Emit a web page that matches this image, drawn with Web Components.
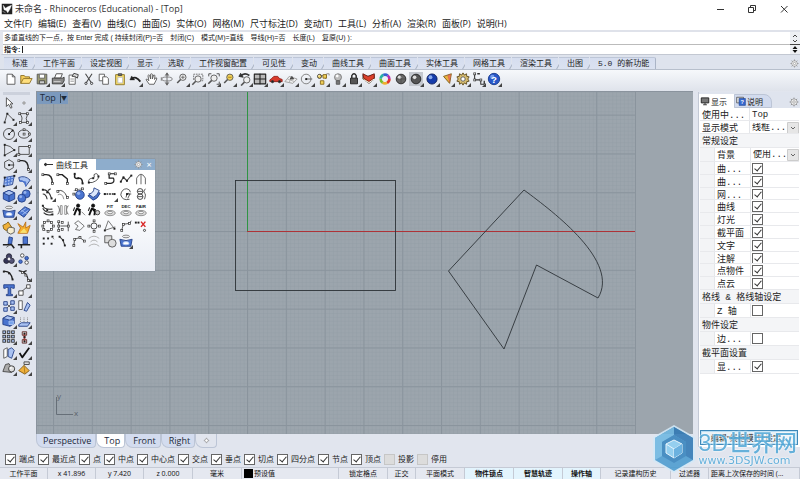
<!DOCTYPE html>
<html lang="zh-CN">
<head>
<meta charset="utf-8">
<title>未命名 - Rhinoceros (Educational) - [Top]</title>
<style>
html,body{margin:0;height:100%}
body{font-family:"Open Sans","Noto Sans CJK SC",sans-serif;color:#222;background:#e0e4ed}
</style>
</head>
<body>
<rhino-app></rhino-app>
<script>
const INK='#333';
const p=(d,s=INK,f='none',w=1)=>`<path d="${d}" stroke="${s}" fill="${f}" stroke-width="${w}" stroke-linejoin="round"/>`;
const c=(x,y,r,f='none',s=INK)=>`<circle cx="${x}" cy="${y}" r="${r}" fill="${f}" stroke="${s}"/>`;
const e=(x,y,a,b,f='none',s=INK)=>`<ellipse cx="${x}" cy="${y}" rx="${a}" ry="${b}" fill="${f}" stroke="${s}"/>`;
const n=(...a)=>a.map(([x,y])=>`<rect x="${x-1}" y="${y-1}" width="2.2" height="2.2" fill="#fff" stroke="#333" stroke-width=".8"/>`).join('');
const k=(...a)=>a.map(([x,y])=>`<rect x="${x-1}" y="${y-1}" width="2.2" height="2.2" fill="#222"/>`).join('');
const t=(s)=>`<text x="8" y="6" font-size="5" font-weight="700" text-anchor="middle" font-family="Liberation Sans" fill="#222">${s}</text>`+e(8,11.5,6,3,'#ddd','#888')+e(8,11,3,1.3,'#fff','#888');
const ball=(x,y,r,f,h='#fff',s='#333')=>c(x,y,r,f,s)+`<circle cx="${x-r*.3}" cy="${y-r*.35}" r="${r*.38}" fill="${h}" opacity=".8"/>`;
const B='#4a74cf',L='#a9c2f2',D='#243f86',Y='#f2d25a',G='#888';
const lens=(x,y,f='#eee')=>c(x,y,3.6,f,'#555')+p(`M${x-2.6} ${y+2.6}L${x-6.5} ${y+6.5}`,'#555','none',1.8);
const walker=c(7,3,1.8,'#111','#111')+p('M6 5.5L4 10L2.5 14M6 6L9 10L8.5 14M6 6.5L10 8.5','#111','none',2.2)+p('M3 5L1.5 9','#111','none',1.2);
const vase=e(8,2.8,4,1.5,'#eee','#777')+p('M1 6L2.5 14H13.5L15 6Q8 9 1 6Z',D,B)+e(8,10.5,3.5,1.8,'#fff',L);
const ICONS={
 logo:'<rect x="1" y="1" width="14" height="14" fill="#222"/>'+p('M3 3L6 7L9 5L14 3L12 8L9 13L7 10L4 9Z','#fff','#fff',.5)+p('M2 11L6 13','#999'),
 file:p('M3.5 2.5H9.5L12.5 5.5V14H3.5ZM9.5 2.5V5.5H12.5','#555','#fff'),
 open:p('M2 13V4H6L7 5.5H12V7.5','#8d6f24','#f3cc58')+p('M2 13L5 7.5H15L12 13Z','#8d6f24','#ffdf7d'),
 save:p('M2.5 2.5H13.5V13.5H2.5Z','#555','#9a9a72')+p('M5 2.5H11V7H5Z','#666','#fff')+p('M5 10H11V13.5H5Z','#444','#ccc'),
 print:p('M4 7L6 2H13L11 7Z','#444','#fff')+p('M1.5 7H13L15 6V10L13 13.5H1.5Z','#333','#888')+p('M3 11H11','#ddd'),
 props:p('M3.5 3.5H10.5V14H3.5Z','#555','#fff')+p('M7 5L9 1.5L14 3L13 7L10 5Z','#333','#ddd')+p('M5 8H9M5 10.5H9',G),
 cut:p('M4 2L10.5 12M11.5 2L5 12','#444','none',1.2)+c(4.5,13,1.3)+c(11,13,1.3),
 copy:p('M2.5 2.5H8.5V10H2.5Z','#555','#fff')+p('M6.5 5.5H11L13 7.5V14H6.5Z','#555','#fff'),
 paste:p('M3 3H13V14.5H3Z','#8c7424','#f5da66')+p('M5.5 6H11V12.5H5.5Z','#bbb','#fff')+p('M6 2H10V4H6Z','#444','#777'),
 undo:p('M3 8Q8 4 13 11','#222','none',2)+p('M1 9L3 4.5L6.5 9Z','#222','#222',.5),
 hand:p('M6 14L2.5 9Q2 7.5 4 8.5L5.5 10L4.5 4Q5.5 2.5 6.5 4L7.5 8V2.5Q8.5 1.5 9.5 2.5V8L11 3.5Q12.5 3 12.5 4.5L12 8.5L13.5 6.5Q15 6.5 14.5 8L11.5 14Z','#555','#fff'),
 orbit:e(8,8,6,2.3,'none','#777')+p('M8 1V15M6 4L8 1L10 4M6 12L8 15L10 12','#666','#666')+p('M1.5 6V10','#777'),
 zoom:lens(9,6)+p('M9 4V8M7 6H11','#666'),
 zwin:p('M3 9V2.5H13.5V10H9','#666','none').replace('/>',' stroke-dasharray="2 1"/>')+lens(8,8),
 zext:p('M2 5V2H5M11 2H14V5M14 11V14H11','#444')+lens(8,7),
 zsel:lens(9,6,Y)+p('M7 6H11',"#a47c12"),
 vundo:p('M3 5Q7 0 13 4','#333','none',1.8)+p('M1 5L3 1.5L6 6Z','#333','#333')+lens(10,9),
 four:p('M1.5 2.5H14.5V13.5H1.5Z','#222','#b9b9b9',1.3)+p('M8 2V14M1 8H15','#222','none',1.3),
 car:p('M1 9L3 7.5L5.5 5H10L12 7.5L15 8.5V11H1Z','#8e1b16','#d83a2c')+c(4,11,1.3,'#222')+c(12,11,1.3,'#222'),
 cplane:p('M1 11L6 5L15 8L10 13Z','#999','#eee')+p('M4 8L12 11M8 6L6 12','#aaa')+p('M7 8H11L9 5Z','#444','#555'),
 circ:c(7,8,5.5,'none','#777')+p('M7 8H14','#555')+k([7,8]),
 objs:p('M5 5L12 3L11 8','#555')+ball(4,5,2.3,Y)+p('M8 3H12V7H8ZM5 10H9V14H5Z','#866719',Y)+p('M12 2H15V4',G),
 bulb:c(8,6,4,'#bbb','#777')+p('M6 10H10V14H6Z','#555','#777')+c(7,4.5,1.2,'#fff','#fff'),
 lock:p('M5.5 7V4Q8 0 10.5 4V7','#222','none',1.6)+p('M4 7H12V13.5H4Z','#222','#555'),
 layer:p('M1 3L6 5L14 3V8L8 13L1 8Z','#555','#f8a54b')+p('M1 2L7 5L14 2V7L8 11L2 7Z','#6e1c14','#db3f2a')+p('M2 9L8 12L14 8','#fff'),
 wheel:['#e3382a','#efb02d','#79bd31','#27b0a4','#315fd1','#b22eae'].map((v,i)=>`<circle cx="8" cy="8" r="5" fill="none" stroke="${v}" stroke-width="3" stroke-dasharray="5.3 26.2" stroke-dashoffset="${-5.236*i}"/>`).join(''),
 ball:ball(8,8,5.5,'#666','#fff','#222')+p('M8 3V13M3 8H13','#444','none',.6),
 ballbox:'<rect width="16" height="16" fill="#c4c8cf"/>'+ball(8,8,5.5,'#555','#fff','#222'),
 blueball:ball(8,8,5.8,'#163cab','#a7c8ff','#0a1b58'),
 arrow:p('M4 5L13 2L11 13Z','#795b1c','#e9b23f')+p('M9 4L12 3L11 11Z','#c44','#ee815a',.5),
 gear:`<g stroke="#5a4719" fill="#d7bd71"><path d="M8 1L9.5 3.5L12 2L12.3 5L15 5.5L13.5 8L15 10.5L12.3 11L12 14L9.5 12.5L8 15L6.5 12.5L4 14L3.7 11L1 10.5L2.5 8L1 5.5L3.7 5L4 2L6.5 3.5Z"/></g>`+c(8,8,2.5,'#fff','#555'),
 dim:p('M3 2V9H10V14H14','#333','none',1.2)+n([3,2],[10,9],[3,9])+p('M6 2H9M14 10V14','#333','none',1.5),
 help:ball(8,8,6.5,'#2857c8','#88aef5','#15388c')+'<text x="8" y="12" font-size="11" font-weight="700" text-anchor="middle" font-family="Liberation Sans" fill="#fff">?</text>',
 select:p('M5 2L5 12L7.5 9.5L10 14L11.5 13L9.5 9H12.5Z','#444','#fff'),
 point:c(8,8,1.3,'#fff','#777'),
 poly:p('M3 13L6 3L13 10','#444')+k([3,13],[6,3],[13,10]),
 curve:p('M3 3H11M3 3Q8 8 4 13H12M12 4Q9 9 12 13','#444')+n([3,3],[12,3],[4,13],[12,13]),
 circle:c(8,8,6.3,'none','#444')+p('M8 8L12 4','#333')+k([8,8],[12,4]),
 ellipse:e(8,8,6.5,4.8,'none','#444')+n([8,3],[8,8],[14,8]),
 arc:p('M3 2V14L14 8Q10 3 3 2Z','#444')+k([3,2],[3,14],[14,8]),
 rect:p('M2 4H14V13H2Z','#444')+n([2,13],[14,4]),
 polygon:p('M3 4.5L8 2L13 5V11L8 14L3 11Z','#444')+p('M8 8H14')+k([8,8]),
 fillet:p('M2 3H6Q13 3 13 13','#222','none',1.7)+n([2,3],[13,13]),
 surf:p('M3 4L14 2L12 12L2 14Z',D,L)+p('M6 3.5L6 13M10 3L9 12M3 7L13 5M3 10.5L12 8',B,'none',1.3)+k([3,4],[14,2],[2,14]),
 surf2:p('M2 4Q9 1 15 7L10 14Q9 7 3 8Z',D,L)+p('M3 8Q9 7 10 14V9Z',B,B),
 box:p('M1.5 4.5L8 1.5L14.5 4.5V11.5L8 14.5L1.5 11.5Z',D,B)+p('M1.5 4.5L8 7.5L14.5 4.5L8 1.5Z',D,L)+p('M8 7.5V14',D),
 balls:ball(10.5,5.5,4.5,B,L,D)+ball(5.5,10.5,4.5,B,L,D),
 vase,
 plane:p('M1 9L9 2L15 5L8 14Z',D,B)+p('M4 8L10 4M6 11L13 6M5 6L11 10',L),
 puzzle:p('M1 5L5 3L7 1L9 4L11 7L8 9L5 11L2 9Z','#7d5a10','#f0b13b')+p('M6 9L9 7L14 8L14 13L10 15L6 13Z','#555','#f5ecd0'),
 burst:p('M1 14L4 8L1 3L7 7L10 1L10 8L15 5L12 14Z','#b9701d','#f6b02d')+p('M4 13L8 9L11 13Z','#f7e071','#f7e071'),
 trim:p('M8 1L12 2L11 9L7 9Z',D,B)+p('M1 10H11L14 14','#222','none',1.8)+p('M5 13L9 10','#555'),
 split:p('M7 1H12V9H7Z',D,B)+p('M1 10H15M5 10V14','#222','none',1.8),
 group:c(8,5,3,'#446','#223')+c(5,10,3,'#335','#223')+c(11,10,3,'#557','#223')+c(8,8,1.2,'#fff','#fff'),
 ungroup:c(6,4,2,'#fff','#444')+c(11,7,2,B,D)+c(4,11,2,B,D)+c(11,12,2,'#fff','#444'),
 edit:p('M2 4Q10 3 12 13','#222','none',1.5)+k([2,4],[8,6],[12,13]),
 edit2:p('M2 3Q11 4 13 14M6 5L11 3','#222','none',1.3)+n([6,5],[10,8],[13,14]),
 text:p('M2 2H14V6H12L11 5H10V13H12V14.5H5V13H7V5H5L4 6H2Z',D,B),
 move:p('M4 11L12 4','#444')+p('M2 9H7V14H2ZM11 2H15V6H11Z',"#444",'#fff'),
 array:p('M5 5L11 11M11 5L5 11','#555')+p('M2 3H6V7H2ZM10 2H14V6H10ZM2 10H6V14H2ZM10 9H14V13H10Z',D,L),
 mirror:p('M2 2H6V12H2Z','#555','#fff')+p('M8 13L12 4L15 7L11 14Z',D,L),
 boolean:p('M1 5L6 2L14 4V11L9 14L1 12Z',D,B)+p('M1 5L6 2L14 4L9 7ZM9 7V14',D,L)+p('M8 8H13V12H8Z',L,'#78a4ec'),
 lights:p('M2 12L5 10H15L12 14H2Z',D,L)+p('M4 9V3M8 9V3M12 9V3','#777').replace('/>',' stroke-dasharray="1 1"/>'),
 grid9:[2,7,12].map(y=>[2,7,12].map(x=>`<rect x="${x-1}" y="${y-1}" width="3" height="3" fill="${L}" stroke="#333"/>`).join('')).join(''),
 chain:p('M6 2H11V6H6ZM6 11H11V15H6Z','#5a2422','#eee')+p('M8.5 4V13','#a8403a','none',2)+k([8.5,4],[8.5,8],[8.5,13]),
 layers2:p('M2 4L6 2V12L2 14Z','#555','#fff')+p('M7 4L11 2L14 5L11 14L7 12Z',D,L),
 check:p('M3 8L6 13L14 2','#111','none',2),
 solids:p('M1 12L4 4L8 3L11 8V13Z','#444','#aaa')+ball(11,9,3.5,'#ddd'),
 pyramid:p('M2 11L8 5L14 11L9 15Z','#7d5815','#f0b13b')+p('M8 5L9 14','#a87820')+p('M8 1H14V4H8Z','#444','#ddd'),
 chamfer:p('M2 3H7L13 8V13','#222','none',1.5)+n([2,3],[13,13]),
 fillet3:p('M3 2V6Q4 8 8 7Q12 7 12 13','#222','none',1.7)+k([3,2],[7,7],[12,13]),
 link:p('M2 12Q1 7 7 7Q9 7 8 3Q12 0 13 5Q14 9 6 12Z','#444')+k([2,12],[7,7],[13,5]),
 sweep:p('M14 2H7V7H12Q14 12 9 13H3','#222','none',1.4)+n([14,2],[7,2],[3,13]),
 zig:p('M2 11L5 6L9 10L14 4','#444','none',1.3)+k([2,11],[5,6],[9,10],[14,4]),
 arch:p('M3 14V7Q8 -2 13 7V14M8 3V14','#555'),
 offset:p('M2 3Q9 3 12 13M2 8Q6 8 7 14M8 4L11 2','#333','none',1.3)+k([2,3],[7,6],[12,13]),
 offset2:p('M2 5Q8 1 13 12','#333')+p('M2 9Q7 6 9 14',G)+n([2,5],[13,12]),
 spherec:ball(9,9,5,B,L,D)+p('M2 4L6 3L12 2',G)+n([2,8],[5,3],[12,2]),
 sheet:p('M1 10Q7 9 9 4L15 7Q12 14 7 15Z',D,B)+p('M2 8Q8 7 8 1L14 4Q12 10 7 12Z',D,'#dce7fd'),
 dash:p('M1 8H14','#222','none',1.5).replace('/>',' stroke-dasharray="2 1"/>')+k([2,8],[13,8]),
 spiral:p('M8 12L9 8Q12 6 12 9L10 13M9 8H14M12 14Q4 16 2 9Q3 2 9 2Q13 3 13 6','#444')+k([9,8]),
 knot:c(7,5,3.2)+c(7,11,3.2)+p('M13 2Q10 5 12 7Q14 8 12 14M4 5H10M4 11H10','#444'),
 fan:p('M2 3Q4 8 13 7M2 6Q5 12 14 10M3 11Q7 15 13 13','#333','none',1.3)+k([2,3],[7,8],[13,13]),
 mirrorc:p('M2 3Q6 8 2 13M14 3Q10 8 14 13','#555')+p('M5 3H7V13H5ZM10 3H12V13H10Z',G),
 walk:walker+p('M11 10L15 14','#777'),
 walk2:walker+c(12,11,2.5,'#ccc'),
 fit:t('FIT'),dec:t('DEC'),fair:t('FAIR'),
 ring:c(8,8,5.5,'none','#999')+n([8,2],[12,4],[14,8],[12,12],[8,14],[3,12],[2,8],[4,4]),
 ladder:p('M3 3V14M5 8H13M14 3V14','#444')+n([3,3],[3,8],[3,13],[7,4],[7,12],[14,8]),
 hex:p('M3 5L7 2L14 8L9 13L4 12L7 8Z','#666'),
 center:c(8,8,3.5,'none','#333')+n([8,2],[14,8],[8,14],[2,8]),
 wedge:p('M2 13L6 2L13 11M2 13L14 9','#666')+k([2,13],[13,11]),
 path:p('M3 13L5 6L12 5L14 2','#444')+n([3,13],[5,6],[12,5]),
 del:k([2,4],[5,4])+p('M8 3L13 9M13 3L8 9','#d92929','none',1.7)+c(12,13,1.2),
 pts:k([3,5],[8,5],[13,3],[3,11],[12,11])+p('M12 3L15 6','#777'),
 seg:p('M4 3L8 7L10 13','#444','none',1.3)+k([4,3],[8,7],[10,13]),
 seg2:p('M2 13L3 6L9 4L14 8','#444')+n([2,13],[3,6],[9,4],[14,8]),
 wifi:p('M2 5Q8 0 14 5M4 9Q8 5 12 9M2 14Q8 9 14 14','#aaa'),
 union:p('M2 2H10V10H2Z','#555','#ddd')+c(10.5,10.5,4.5,'#ddd','#555'),
 monitor:p('M2 3H14V11H2Z','#222','#777',1.5)+p('M5 14H11M8 11V14','#333','none',1.5),
 panelhelp:p('M1 2H12V11H1Z','#333','#ddd')+p('M5 4H15V15H5Z','#204594','#3568cf')+'<text x="10" y="13" text-anchor="middle" font-size="9" font-weight="700" font-family="Liberation Sans" fill="#fff">?</text>',
 plus:p('M8 2L10 6L14 8L10 10L8 14L6 10L2 8L6 6Z','#888','#fff',1.5),
 cog:c(8,8,5,'#eee','#888')+c(8,8,2,'#fff','#888')+p('M8 1V3M8 13V15M1 8H3M13 8H15M3 3L4.5 4.5M11.5 11.5L13 13M13 3L11.5 4.5M4.5 11.5L3 13','#888','none',1.5)
};
const define=(name,html,setup)=>customElements.define(name,class extends HTMLElement{
  constructor(){
    super();
    const tpl=document.createElement('template');
    tpl.innerHTML=`<style>*{box-sizing:border-box}button{font:inherit;color:inherit;border:0;padding:0;background:none}</style>${html}`;
    this.attachShadow({mode:'open'}).append(tpl.content.cloneNode(true));
  }
  connectedCallback(){ if(setup && !this.ready){ this.ready=true; setup(this,this.shadowRoot); } }
});

define('rhino-icon','<style>:host{display:block;width:16px;height:16px}svg{display:block;width:100%;height:100%}</style><svg viewBox="0 0 16 16" aria-hidden="true"></svg>',
 (h,r)=>{ r.querySelector('svg').innerHTML=ICONS[h.getAttribute('name')]||''; });

define('tool-button',`<style>:host{display:grid;place-items:center;min-width:0;min-height:0;position:relative}
 button{display:block}rhino-icon{width:var(--icon,13px);height:var(--icon,13px)}
 :host([flyout])::after{content:"";position:absolute;right:0;bottom:0;border:solid transparent;border-width:2px;border-right-color:#444;border-bottom-color:#444}</style>
 <button type="button"><rhino-icon></rhino-icon></button>`,
 (h,r)=>{ const v=h.getAttribute('icon'); r.querySelector('button').setAttribute('aria-label',v); r.querySelector('rhino-icon').setAttribute('name',v); });

/* icons="a b* c": a star marks a button that opens a flyout */
define('tool-grid','<style>:host{display:grid;grid-template-columns:repeat(var(--cols),1fr);grid-auto-rows:1fr}</style>',
 (h,r)=>{ for(const s of h.getAttribute('icons').trim().split(/\s+/)){
   const b=document.createElement('tool-button'); b.setAttribute('icon',s.replace('*','')); if(s.endsWith('*')) b.setAttribute('flyout',''); r.append(b);} });

define('title-bar',`<style>:host{display:flex;align-items:center;height:17px;background:#fff;padding-left:1px;font-size:9px;color:#333}
 rhino-icon{width:12px;height:12px;margin-right:2px}h1{font-size:9px;font-weight:400;margin:0;flex:1;white-space:nowrap}
 button{width:32px;height:16px;display:grid;place-items:center}svg{width:8px;height:8px;fill:none;stroke:#333}</style>
 <rhino-icon name="logo"></rhino-icon><h1>未命名 - Rhinoceros (Educational) - [Top]</h1>
 <button aria-label="最小化"><svg viewBox="0 0 8 8"><path d="M1 4.5H8"/></svg></button>
 <button aria-label="还原"><svg viewBox="0 0 8 8"><path d="M.5 2.5H5.5V7.5H.5ZM2.5 2.5V.5H7.5V5.5H5.5"/></svg></button>
 <button aria-label="关闭"><svg viewBox="0 0 8 8"><path d="M1 1L7.5 7.5M7.5 1L1 7.5"/></svg></button>`);

define('menu-bar',`<style>:host{display:flex;gap:6px;align-items:center;height:13px;padding-left:4px;background:#fff;font-size:9px;color:#222}
 button{white-space:nowrap;line-height:13px}</style>`,
 (h,r)=>{ for(const s of '文件(F) 编辑(E) 查看(V) 曲线(C) 曲面(S) 实体(O) 网格(M) 尺寸标注(D) 变动(T) 工具(L) 分析(A) 渲染(R) 面板(P) 说明(H)'.split(' ')){
  const b=document.createElement('button'); b.textContent=s; r.append(b);} });

define('command-area',`<style>:host{display:grid;grid-template-columns:1fr 10px;border-top:2px solid #dfe2ea;border-bottom:1px solid #c3c8d2;border-left:3px solid #e3e6ee;background:#fff;font-size:7px;font-family:"Liberation Sans","Noto Sans CJK SC",sans-serif;color:#222}
 p{margin:0;height:12px;line-height:12px;padding-left:1px;display:flex;gap:7px;white-space:nowrap}
 label{display:flex;height:10px;line-height:10px;border-top:1px solid #bbb;padding-left:1px;font-weight:700}
 input{flex:1;border:0;outline:0;padding:0;margin:0 0 0 2px;min-width:0;font:inherit;background:none;border-left:1px solid #222;height:7px;align-self:center}
 svg{width:10px;height:22px;background:#eef0f4;fill:none;stroke:#444}</style>
 <div><p><span>多重直线的下一点，按 Enter 完成 ( 持续封闭(P)=否</span><span>封闭(C)</span><span>模式(M)=直线</span><span>导线(H)=否</span><span>长度(L)</span><span>复原(U) ):</span></p>
 <label>指令: <input aria-label="指令"></label></div>
 <svg viewBox="0 0 10 22" aria-hidden="true"><path d="M3 5L5 3L7 5M3 8L5 10L7 8M0 12.5H10"/><path d="M2.5 17L5 14L7.5 17ZM2.5 18L5 21L7.5 18Z" fill="#111" stroke="none"/></svg>`);

define('tab-strip',`<style>:host{display:flex;align-items:flex-end;height:15px;padding-left:4px;background:#dee3ed;border-bottom:1px solid #b7bfcc;font-size:8px;font-family:"Liberation Mono","Noto Sans CJK SC",sans-serif}
 button{height:12px;line-height:12px;padding:0 6px 0 8px;border-top:1px solid #bdc6d7;background:linear-gradient(#d5ddef,#dbe2f0);position:relative;white-space:nowrap;margin-right:1px}
 button::after{content:"";position:absolute;right:-2px;top:0;width:1px;height:12px;background:#aab4c6;transform:rotate(30deg)}
 button:first-child{background:#f7f9fc;height:13px;padding:0 6px 0 7px}
 button:nth-last-child(2){border-right:1px solid #aab4c6;border-radius:0 2px 0 0}button:nth-last-child(2)::after{display:none}
 rhino-icon{width:9px;height:9px;margin:0 1px 1px auto}</style>`,
 (h,r)=>{ for(const s of '标准,工作平面,设定视图,显示,选取,工作视窗配置,可见性,变动,曲线工具,曲面工具,实体工具,网格工具,渲染工具,出图,5.0 的新功能'.split(',')){
  const b=document.createElement('button'); b.textContent=s; r.append(b);} const i=document.createElement('rhino-icon'); i.setAttribute('name','cog'); r.append(i); });

define('main-toolbar',`<style>:host{display:block;height:21px;background:linear-gradient(#f6f8fb,#dfe3eb);padding:1px 0 0 3px}
 tool-grid{--cols:32;--icon:14px;width:499px;height:16px}</style>
 <tool-grid icons="file open save* print* props cut copy paste undo* hand orbit zoom* zwin* zext* zsel* vundo* four* car* cplane* circ* objs* bulb* lock* layer* wheel ball ballbox* blueball* arrow* gear* dim* help*"></tool-grid>`);

define('side-tools',`<style>:host{display:block;width:36px;padding:0 4px 0 1px;background:#e1e5ee}
 i{display:block;height:3px;background:#ccd1dc;margin:1px 2px 0}tool-grid{--cols:2;--icon:14px;height:281px}</style>
 <i></i><tool-grid icons="select point* poly* curve* circle* ellipse* arc* rect* polygon* fillet* surf* surf2* box* balls* vase* plane* puzzle burst trim split group* ungroup edit edit2* text* move* array* mirror boolean* lights* grid9* chain* layers2* check* solids* pyramid*"></tool-grid>`);

define('tool-palette',`<style>:host{display:flex;flex-direction:column;background:linear-gradient(#fff 40%,#e9edf5);color:#222;font-size:8px;box-shadow:0 0 1px #66758a}
 header{display:flex;align-items:center;height:11px;background:#8eadcc}
 b{display:flex;align-items:center;gap:3px;height:11px;width:57px;padding-left:5px;background:#fff;font-weight:400;white-space:nowrap;border-radius:4px 0 0 0;line-height:11px}
 svg{width:9px;height:5px;stroke:#333;fill:none}rhino-icon{width:9px;height:9px;margin-left:auto}
 button{font-size:9px;line-height:9px;color:#fff;width:12px}
 tool-grid{--cols:7;--icon:14px;width:109px;height:78px;margin:1px 0 22px 1px}</style>
 <header><b><svg viewBox="0 0 9 5"><path d="M0 2.5H9"/><path d="M0 2.5L2 1V4Z" fill="#333"/></svg>曲线工具</b><rhino-icon name="cog"></rhino-icon><button aria-label="关闭">×</button></header>
 <tool-grid icons="fillet chamfer fillet3 link sweep zig arch offset* offset2 spherec sheet dash* spiral knot fan mirrorc walk walk2 fit dec fair ring ladder hex center wedge path del pts seg seg2 wifi union vase*"></tool-grid>`);

define('model-viewport',`<style>:host{display:block;position:relative;flex:1;min-height:0;background:#9ca5ad;overflow:hidden;border-left:1px solid #8a939d;border-top:1px solid #8a939d}
 svg{position:absolute;inset:0;width:100%;height:100%}
 button{position:absolute;left:0;top:0;display:flex;align-items:center;height:12px;padding:0 1px 0 3px;background:#7b99bd;font-size:9px;line-height:12px;color:#1d2a3a}
 button span{border-left:1px solid #33465c;margin-left:4px;font-size:6px;line-height:9px}
 tool-palette{position:absolute;left:2px;top:67px;width:116px}</style>
 <svg aria-label="Top">
  <defs><pattern id="minor" x="210.5" y="139.5" width="3.88" height="3.88" patternUnits="userSpaceOnUse"><path d="M0 0H3.88M0 0V3.88" stroke="#919ba4" stroke-width=".7" fill="none"/></pattern>
  <pattern id="major" x="210" y="139" width="38.8" height="38.8" patternUnits="userSpaceOnUse"><path d="M.5 0V38.8M0 .5H38.8" stroke="#8a949d" stroke-width="1" fill="none"/></pattern></defs>
  <rect width="599" height="100%" fill="url(#minor)"/><rect width="599" height="100%" fill="url(#major)"/>
  <rect x="210" y="0" width="1" height="139" fill="#2f9444"/><rect x="210" y="139" width="388" height="1" fill="#ad3338"/>
  <g fill="none" stroke="#2e3338" stroke-width=".9"><rect x="198.5" y="88.5" width="160" height="110"/>
  <path d="M411.5 179L487 98C518 121 583 170 561 206L499.5 173L467 257Z"/></g>
  <path d="M19.5 305V322.5H36" fill="none" stroke="#666f78"/><g font-size="8" fill="#5b646e"><text x="20" y="307">y</text><text x="37" y="324">x</text></g>
 </svg>
 <button>Top<span>▼</span></button><tool-palette></tool-palette>`);

define('view-tabs',`<style>:host{display:flex;height:17px;font-size:9px;color:#1d2a3a;background:#e1e5ee;padding-bottom:2px}
 button{height:14px;line-height:13px;padding:0 4px 1px 6px;background:#d3dcef;border:1px solid #bcc5d6;border-top:0;border-radius:0 0 4px 8px;white-space:nowrap}
 button+button{padding-left:7px}
 .on{background:#fff}button.add{width:22px;background:#e1e5ee}rhino-icon{width:7px;height:7px}</style>
 <button>Perspective</button><button class="on">Top</button><button>Front</button><button>Right</button><button class="add" aria-label="新建"><rhino-icon name="plus"></rhino-icon></button>`);

define('check-box',`<style>:host{display:inline-flex}label{display:flex;align-items:center;gap:3px;line-height:12px;white-space:nowrap}
 input{appearance:none;margin:0;width:11px;height:11px;border:1px solid #666;background:#fff;display:grid;place-items:center}
 input:checked::after{content:"";width:3px;height:6px;border:solid #333;border-width:0 1px 1px 0;transform:rotate(40deg);margin-top:-2px}
 input:disabled{background:#dcdcdc;border-color:#c6c6c6}</style><label><input type="checkbox"><slot></slot></label>`,
 (h,r)=>{ const i=r.querySelector('input'); i.checked=h.hasAttribute('checked'); i.disabled=h.hasAttribute('disabled'); if(h.hasAttribute('label')) i.setAttribute('aria-label',h.getAttribute('label')); });

define('snap-bar',`<style>:host{display:flex;align-items:center;gap:3px;height:16px;padding-left:5px;background:#e1e5ee;font-size:8px}</style>`,
 (h,r)=>{ '端点 最近点 点 中点 中心点 交点 垂点 切点 四分点 节点 顶点 投影 停用'.split(' ').forEach((s,i)=>{
  const b=document.createElement('check-box'); b.textContent=s; b.setAttribute(i<11?'checked':'disabled',''); r.append(b);}); });

define('status-bar',`<style>:host{display:grid;grid-template-columns:48fr 48fr 48fr 49fr 49fr 97fr 49fr 28fr 49fr 49fr 49fr 38fr 70fr 38fr 91fr;height:12px;background:#e5e8f0;border-top:1px solid #c5cad5;font-size:7px;line-height:11px;color:#111}
 span{border-right:1px solid #c5cad5;text-align:center;white-space:nowrap;overflow:hidden}
 .on{background:#e3f4fd;font-weight:700}.l{text-align:left;padding-left:2px}
 .sw{display:flex;align-items:center;gap:1px;padding-left:2px}i{width:9px;height:9px;background:#000}</style>
 <span>工作平面</span><span>x 41.896</span><span>y 7.420</span><span>z 0.000</span><span>毫米</span><span class="sw"><i></i>预设值</span><span>锁定格点</span><span>正交</span><span>平面模式</span><span class="on">物件锁点</span><span class="on">智慧轨迹</span><span class="on">操作轴</span><span>记录建构历史</span><span>过滤器</span><span class="l">距离上次保存的时间 (...</span>`);

define('property-row',`<style>:host{display:grid;grid-template-columns:49px 1fr;align-items:stretch;border-bottom:1px solid #e8e9ec;min-height:0;overflow:hidden}
 :host([indent]){grid-template-columns:15px 35px 1fr}i{display:none;background:#f3f4f6;border-right:1px solid #e4e6ea}:host([indent]) i{display:block}
 span{padding-left:2px;display:flex;align-items:center;white-space:nowrap}
 div{display:flex;align-items:center;border-left:1px solid #e4e6ea;padding-left:1px;min-width:0}
 :host([head]){display:block;background:#f4f5f7}:host([head]) div{display:none}:host([head]) span{height:100%}</style><i></i><span></span><div><slot></slot></div>`,
 (h,r)=>{ r.querySelector('span').textContent=h.getAttribute('name'); });

define('drop-down',`<style>:host{display:flex;flex:1;height:100%;min-width:0}select{flex:1;min-width:0;appearance:none;border:0;margin:0;padding:0 0 0 1px;font:inherit;color:inherit;border-radius:0;
 background:#fff url("data:image/svg+xml,%3Csvg xmlns='http://www.w3.org/2000/svg' width='12' height='12'%3E%3Cpath d='M.5.5h11v11H.5z' fill='%23e6e6e6' stroke='%23ccc'/%3E%3Cpath d='M4 5l2 2 2-2' fill='none' stroke='%23666'/%3E%3C/svg%3E") right center no-repeat}</style><select></select>`,
 (h,r)=>{ const s=r.querySelector('select'); s.add(new Option(h.getAttribute('value'))); s.setAttribute('aria-label',h.getAttribute('label')); });

define('display-panel',`<style>:host{display:flex;flex-direction:column;width:102px;background:#fff;font-size:9px;color:#222;border-left:1px solid #c3c9d5}
 nav{display:flex;align-items:flex-end;height:16px;background:#dfe4ee;font-size:8px}
 nav button{display:flex;align-items:center;gap:1px;height:14px;padding:0 7px 0 1px;background:#fff;white-space:nowrap}
 nav button+button{background:#d2dbee;border:1px solid #bcc5d6;border-radius:0 8px 0 0;padding-right:8px}
 nav rhino-icon{width:10px;height:10px}nav .cog{margin:0 1px 1px auto}
 section{display:grid;margin:0 1px;font-family:"Liberation Mono","Noto Sans CJK SC",sans-serif}.a{grid-template-rows:13px 13px 14px 14px}.b{height:128px;grid-auto-rows:1fr}.c{grid-auto-rows:14px}
 .edit{margin:auto 2px 2px 1px;height:15px;border:1px solid #3d87b8;outline:1px solid #b9dff4;outline-offset:-2px;background:#e9f1f7;font-size:8px;line-height:12px}
 .v{padding-left:1px}</style>
 <nav><button><rhino-icon name="monitor"></rhino-icon>显示</button><button><rhino-icon name="panelhelp"></rhino-icon>说明</button><rhino-icon class="cog" name="cog"></rhino-icon></nav>
 <section class="a"><property-row name="使用中..."><span class="v">Top</span></property-row><property-row name="显示模式"><drop-down value="线框..." label="显示模式"></drop-down></property-row><property-row head name="常规设定"></property-row><property-row indent name="背景"><drop-down value="使用..." label="背景"></drop-down></property-row></section>
 <section class="b"></section>
 <section class="c"><property-row head name="格线 &amp; 格线轴设定"></property-row><property-row indent name="Z 轴"><check-box label="Z 轴"></check-box></property-row><property-row head name="物件设定"></property-row><property-row indent name="边..."><check-box label="边"></check-box></property-row><property-row head name="截平面设置"></property-row><property-row indent name="显..."><check-box checked label="显示"></check-box></property-row></section>
 <button class="edit">编辑"线框模式"设定...</button>`,
 (h,r)=>{ r.querySelector('.b').innerHTML='曲... 曲... 网... 曲线 灯光 截平面 文字 注解 点物件 点云'.split(' ').map(s=>`<property-row indent name="${s}"><check-box checked label="${s}"></check-box></property-row>`).join(''); });

define('site-mark',`<style>:host{position:fixed;right:3px;bottom:5px;display:flex;align-items:center;gap:3px;pointer-events:none;color:#54a9d8;opacity:.88}
 svg{width:44px;height:50px}div{display:grid}b{font-size:23px;line-height:24px;font-weight:500;font-family:"Liberation Sans","Noto Sans CJK SC",sans-serif;white-space:nowrap;text-shadow:0 0 2px #fff,0 0 2px #fff}
 small{font-size:11px;line-height:12px;font-family:"DejaVu Sans",sans-serif;text-shadow:0 0 2px #fff,0 0 2px #fff}</style>
 <svg viewBox="0 0 44 50"><path d="M22 1L43 13V37L22 49L1 37V13Z" fill="#d3e9f7"/><path d="M22 3L41 14V36L22 47L3 36V14Z" fill="#4b9bd0"/><path d="M22 3L41 14V36L34 32V18L22 11Z" fill="#2f78b4"/><path d="M3 14L22 3V11L10 18V32L3 36Z" fill="#6eb8e2"/><path d="M22 11L34 18V32L22 39L10 32V18Z" fill="#3583bd"/><path d="M22 16L30 20V29L22 34L14 29V20Z" fill="#8accf0" stroke="#e8f7ff"/><path d="M14 20L22 25L30 20M22 25V34" fill="none" stroke="#e8f7ff"/><path d="M22 25L30 20V29L22 34Z" fill="#5baadd"/></svg>
 <div><b>3D世界网</b><small>www.3DSJW.com</small></div>`);

define('rhino-app',`<style>:host{display:flex;flex-direction:column;min-height:100vh;background:#e1e5ee}
 main{flex:1;display:flex;min-height:0}.view{flex:1;min-width:0;display:flex;flex-direction:column}
 display-panel{margin:1px 0 4px 5px}</style>
 <title-bar></title-bar><menu-bar></menu-bar><command-area></command-area><tab-strip></tab-strip><main-toolbar></main-toolbar>
 <main><side-tools></side-tools><div class="view"><model-viewport></model-viewport><view-tabs></view-tabs></div><display-panel></display-panel></main>
 <snap-bar></snap-bar><status-bar></status-bar><site-mark></site-mark>`);
</script>
</body>
</html>
